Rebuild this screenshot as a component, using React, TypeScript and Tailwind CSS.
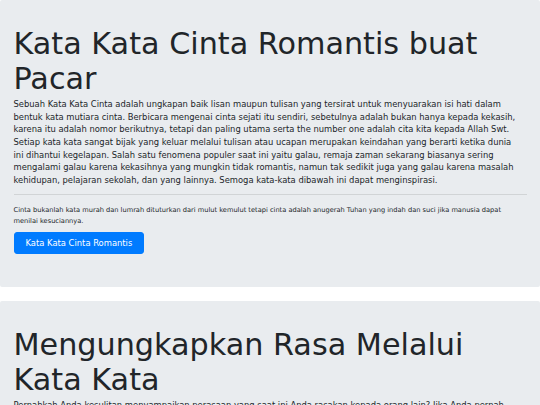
export default function App() {
  return (
    <div className="min-h-screen bg-white font-['DejaVu_Sans',sans-serif] text-[#212529]">
      {/* Jumbotron: intro */}
      <section className="mb-[14px] rounded-[2px] bg-[#e9ecef] px-[13.5px] py-[26px]">
        <h1 className="mb-[2px] text-[30.24px] font-normal leading-[35px]">
          Kata Kata Cinta Romantis buat Pacar
        </h1>
        <p className="pr-[3px] text-[8.4px] leading-[12.67px]">
          Sebuah Kata Kata Cinta adalah ungkapan baik lisan maupun tulisan yang tersirat untuk
          menyuarakan isi hati dalam bentuk kata mutiara cinta. Berbicara mengenai cinta sejati itu
          sendiri, sebetulnya adalah bukan hanya kepada kekasih, karena itu adalah nomor berikutnya,
          tetapi dan paling utama serta the number one adalah cita kita kepada Allah Swt. Setiap kata
          kata sangat bijak yang keluar melalui tulisan atau ucapan merupakan keindahan yang berarti
          ketika dunia ini dihantui kegelapan. Salah satu fenomena populer saat ini yaitu galau, remaja
          zaman sekarang biasanya sering mengalami galau karena kekasihnya yang mungkin tidak romantis,
          namun tak sedikit juga yang galau karena masalah kehidupan, pelajaran sekolah, dan yang
          lainnya. Semoga kata-kata dibawah ini dapat menginspirasi.
        </p>
        <hr className="mb-[10px] mt-[7px] border-t border-black/10" />
        <p className="text-[6.65px] leading-[11px]">
          Cinta bukanlah kata murah dan lumrah dituturkan dari mulut kemulut tetapi cinta adalah
          anugerah Tuhan yang indah dan suci jika manusia dapat menilai kesuciannya.
        </p>
        <p className="mb-[7px] mt-[2px]">
          <a
            href="#"
            className="inline-block rounded-[3px] border border-[#007bff] bg-[#007bff] px-[11px] py-[3.5px] text-[8.4px] leading-[12.6px] text-white"
          >
            Kata Kata Cinta Romantis
          </a>
        </p>
      </section>

      {/* Jumbotron: second article */}
      <section className="mb-[14px] rounded-[2px] bg-[#e9ecef] px-[13.5px] py-[26px]">
        <h1 className="mb-[2px] text-[30.24px] font-normal leading-[35px]">
          Mengungkapkan Rasa Melalui Kata Kata
        </h1>
        <p className="pr-[3px] text-[8.4px] leading-[12.67px]">
          Pernahkah Anda kesulitan menyampaikan perasaan yang saat ini Anda rasakan kepada orang lain?
          Jika Anda pernah mengalaminya, kata kata bisa menjadi jembatan untuk mengungkapkan isi hati
          dengan cara yang lebih indah dan bermakna.
        </p>
      </section>
    </div>
  );
}
